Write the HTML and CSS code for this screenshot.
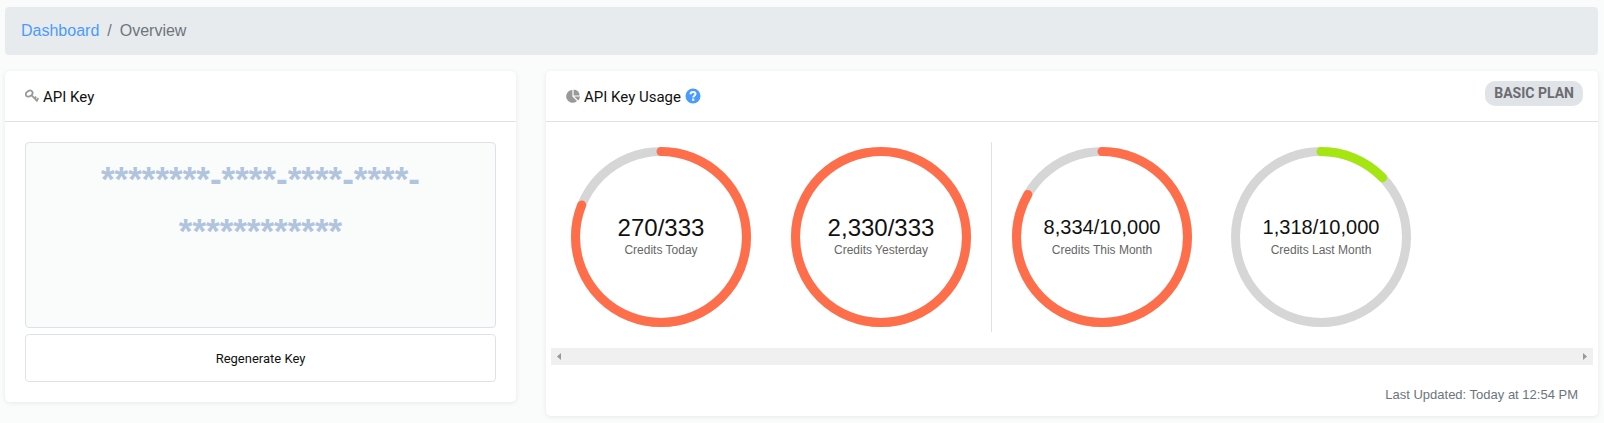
FILE: index.html
```html
<!DOCTYPE html>
<html lang="en">
<head>
<meta charset="utf-8">
<title>Dashboard - Overview</title>
<link rel="stylesheet" href="styles.css">
</head>
<body>
<nav class="breadcrumb" aria-label="Breadcrumb">
  <a href="#">Dashboard</a><span class="sep">/</span><span>Overview</span>
</nav>
<main class="grid">
  <section class="card">
    <header class="card-head">
      <svg class="icon" viewBox="0 0 14 14" aria-hidden="true">
        <ellipse cx="4.2" cy="4.6" rx="3.6" ry="2.7" transform="rotate(-35 4.2 4.6)" fill="none" stroke="#999" stroke-width="1.8"/>
        <path d="M6.4 6.2l6.2 6.2M9.3 9.6l1.9-1.9M11.3 11.4l2.2-2.2" fill="none" stroke="#999" stroke-width="1.8"/>
      </svg>
      <h2>API Key</h2>
    </header>
    <div class="key-body">
      <div class="key-box">********-****-****-****-<wbr>************</div>
      <button class="regen" type="button">Regenerate Key</button>
    </div>
  </section>
  <section class="card">
    <header class="card-head">
      <svg class="icon" viewBox="0 0 14 14" aria-hidden="true">
        <path d="M6.4 1v6.4l4.6 4.6A6.4 6.4 0 1 1 6.4 1z" fill="#999"/>
        <path d="M7.6 .4a6.2 6.2 0 0 1 6 6H7.6z" fill="#999"/>
        <path d="M8.2 7.4H14a6.4 6.4 0 0 1-1.8 4z" fill="#999"/>
      </svg>
      <h2>API Key Usage</h2>
      <button class="help" type="button" aria-label="Help">
        <svg viewBox="0 0 16 16" aria-hidden="true">
          <circle cx="8" cy="8" r="7.5" fill="#4a9bff"/>
          <path d="M5.6 6.3C5.6 4.7 6.6 4 8 4s2.5.8 2.5 2.1c0 1.7-2.3 1.7-2.3 3.3" fill="none" stroke="#fff" stroke-width="2"/>
          <rect x="7.1" y="10.6" width="2.2" height="2.2" fill="#fff"/>
        </svg>
      </button>
      <span class="badge">BASIC PLAN</span>
    </header>
    <div class="usage">
      <div class="gauges">
        <div class="gauge">
          <svg viewBox="0 0 180 180" aria-hidden="true"><circle class="track" cx="90" cy="90" r="85.5"/><circle class="bar" cx="90" cy="90" r="85.5" pathLength="1000" stroke-dasharray="811 1000" transform="rotate(-90 90 90)"/></svg>
          <div class="label"><span class="value">270/333</span><span class="caption">Credits Today</span></div>
        </div>
        <div class="gauge">
          <svg viewBox="0 0 180 180" aria-hidden="true"><circle class="track" cx="90" cy="90" r="85.5"/><circle class="bar" cx="90" cy="90" r="85.5"/></svg>
          <div class="label"><span class="value">2,330/333</span><span class="caption">Credits Yesterday</span></div>
        </div>
        <div class="gauge divided">
          <svg viewBox="0 0 180 180" aria-hidden="true"><circle class="track" cx="90" cy="90" r="85.5"/><circle class="bar" cx="90" cy="90" r="85.5" pathLength="1000" stroke-dasharray="833 1000" transform="rotate(-90 90 90)"/></svg>
          <div class="label"><span class="value long">8,334/10,000</span><span class="caption">Credits This Month</span></div>
        </div>
        <div class="gauge">
          <svg viewBox="0 0 180 180" aria-hidden="true"><circle class="track" cx="90" cy="90" r="85.5"/><circle class="bar low" cx="90" cy="90" r="85.5" pathLength="1000" stroke-dasharray="128 1000" transform="rotate(-90 90 90)"/></svg>
          <div class="label"><span class="value long">1,318/10,000</span><span class="caption">Credits Last Month</span></div>
        </div>
      </div>
      <div class="scrollbar" aria-hidden="true">
        <svg viewBox="0 0 17 17"><path d="M10 5v7L6 8.5z" fill="#999"/></svg>
        <svg viewBox="0 0 17 17"><path d="M7 5v7l4-3.5z" fill="#999"/></svg>
      </div>
    </div>
    <footer class="updated">Last Updated: Today at 12:54 PM</footer>
  </section>
</main>
</body>
</html>
```
FILE: styles.css
```css
* { box-sizing: border-box; }
body {
  margin: 0;
  padding: 7px 6px 6px 5px;
  background: #fafcfc;
  color: #212529;
  font-family: "Liberation Sans", Arial, sans-serif;
}
.breadcrumb {
  display: flex;
  gap: 8px;
  padding: 12px 16px;
  margin-bottom: 16px;
  border-radius: 4px;
  background: #e8ebee;
  color: #6c757d;
  font-size: 16px;
  line-height: 24px;
}
.breadcrumb a { color: #4a9bff; text-decoration: none; }
.grid {
  display: grid;
  grid-template-columns: repeat(12, minmax(0, 1fr));
  column-gap: 30px;
  align-items: start;
}
.card {
  grid-column: span 4;
  background: #fff;
  border-radius: 5px;
  box-shadow: 0 1px 5px rgba(0, 0, 0, .08);
}
.card + .card { grid-column: span 8; }
.card-head {
  display: flex;
  align-items: center;
  height: 51px;
  padding: 0 15px 0 20px;
  border-bottom: 1px solid #dee2e6;
}
.card-head h2 {
  margin: 0 4px;
  padding-top: 2px;
  color: #111;
  font: 400 15px/20px Roboto, sans-serif;
}
.icon { width: 14px; height: 14px; }
.help {
  width: 16px;
  height: 16px;
  padding: 0;
  border: 0;
  background: none;
}
.help svg { display: block; }
.badge {
  align-self: flex-start;
  margin: 10px 0 0 auto;
  padding: 0 9px;
  border-radius: 10px;
  background: #e0e3e8;
  color: #6c6c70;
  font: 700 14px/25px Roboto, sans-serif;
}
.key-body {
  display: flex;
  flex-direction: column;
  gap: 6px;
  padding: 20px;
}
.key-box {
  min-height: 186px;
  padding: 10px 16px 0;
  border: 1px solid #dee2e6;
  border-radius: 4px;
  background: #fafcfc;
  color: #b0c4de;
  text-align: center;
  font-size: 35px;
  font-weight: 700;
  line-height: 52px;
}
.regen {
  height: 48px;
  padding: 2px 0 0;
  border: 1px solid #dee2e6;
  border-radius: 4px;
  background: #fff;
  color: #111;
  font: 400 13px/20px Roboto, sans-serif;
}
.usage { padding: 20px 5px 0; }
.gauges { display: flex; margin-bottom: 16px; }
.gauge {
  display: grid;
  place-items: center;
  padding: 5px 20px;
}
.gauge > * { grid-area: 1 / 1; }
.gauge svg { display: block; width: 180px; height: 180px; }
.divided { padding-right: 19px; border-left: 1px solid #dee2e6; }
.track { fill: none; stroke: #d6d6d6; stroke-width: 9; }
.bar { fill: none; stroke: #ff6e4a; stroke-width: 9; stroke-linecap: round; }
.low { stroke: #a5e610; }
.label {
  display: flex;
  flex-direction: column;
  align-items: center;
  padding-bottom: 2px;
  color: #111;
}
.value { font-size: 24px; line-height: 28px; }
.long { padding-bottom: 2px; font-size: 20px; line-height: 26px; }
.caption { color: #666; font-size: 12px; line-height: 16px; }
.scrollbar {
  display: flex;
  justify-content: space-between;
  height: 17px;
  background: #f0f0f0;
}
.scrollbar svg { width: 17px; height: 17px; }
.updated {
  padding: 20px 20px 11px;
  color: #6c757d;
  text-align: right;
  font-size: 13px;
  line-height: 20px;
}
```
